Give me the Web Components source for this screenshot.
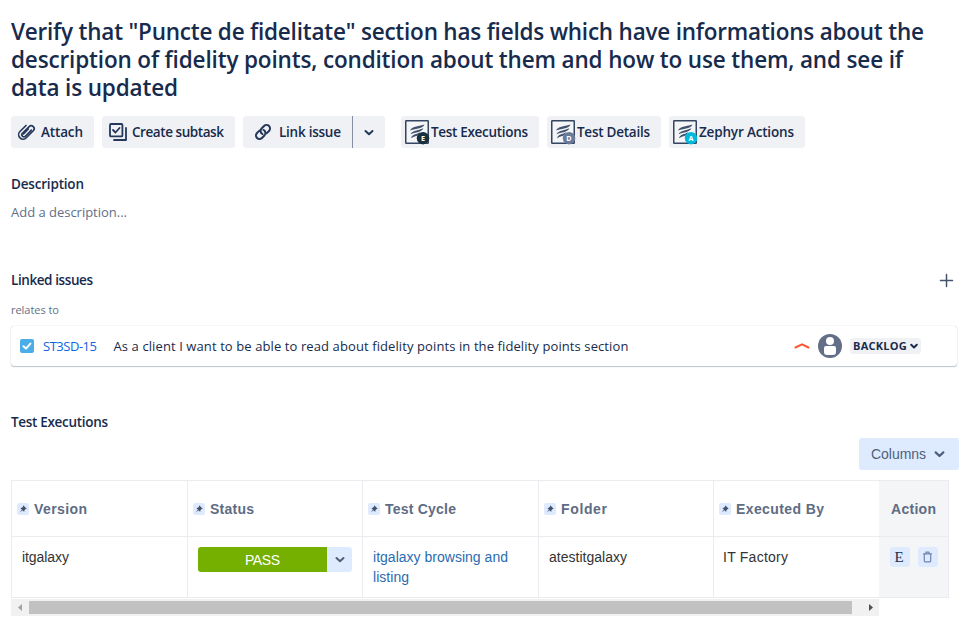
<!DOCTYPE html>
<html lang="en">
<head>
<meta charset="utf-8">
<title>Issue details</title>
<style>
html{background:#fff}
body{margin:0;overflow:hidden;font-family:"Open Sans","Noto Sans",sans-serif;color:#172b4d}
</style>
</head>
<body>
<issue-page></issue-page>
<script>
const define=(name,html,setup)=>customElements.define(name,class extends HTMLElement{
  connectedCallback(){
    if(this.shadowRoot)return;
    const t=document.createElement('template');
    t.innerHTML=typeof html==='function'?html(this):html;
    this.attachShadow({mode:'open'}).appendChild(t.content.cloneNode(true));
    if(setup)setup(this);
  }
});

/* One line of text, tracked so that it spans the width in its "w" attribute. */
define('text-line','<style>:host{display:block;white-space:nowrap}span{display:inline-block}</style><span><slot></slot></span>',el=>{
  const w=+el.getAttribute('w');
  if(!w)return;
  const s=el.shadowRoot.querySelector('span');
  s.style.letterSpacing='0.001px';
  const n=el.textContent.length;
  s.style.letterSpacing=((w-s.getBoundingClientRect().width)/(n-1)).toFixed(3)+'px';
});

const paths={
attach:'<path d="M15.6 8.3l-6.3 6.4a2.1 2.1 0 0 1-3-3l7-7a3 3 0 0 1 4.300 4.300l-7.300 7.300a4.600 4.600 0 0 1-6.600-6.500L10 3.500M12.400 7.200l-5 5" transform="translate(-.6 -.9) scale(.96)"/>',
subtask:'<rect x="1" y="1" width="12.4" height="12.4" rx="1"/><path d="M4 7l2.5 2.5L10.500 5M17 5v12H5"/>',
link:'<g transform="rotate(-45 9 9)"><path d="M7.500 5.500H4a3.500 3.500 0 0 0 0 7h3.500a3.500 3.500 0 0 0 3.300-4.600M10.500 12.500H14a3.500 3.500 0 0 0 0-7h-3.500a3.500 3.500 0 0 0-3.300 4.600"/></g>',
chevron:'<path d="M1.500 2L5 5.300L8.500 2"/>',
plus:'<path d="M6.500 .5v12M.5 6.500h12"/>',
up:'<path d="M1.500 5.500L8 2.300L14.500 5.500"/>',
trash:'<path d="M1.500 2.800h8M4 2.500V1.200h3v1.300M2.300 3v7q0 .8.8.8h4.800q.8 0 .8-.8V3"/>',
check:'<path d="M3.500 7.200l2.500 2.400L10.400 4.600"/>'
};
define('ui-icon',el=>{
  const g=k=>el.getAttribute(k);
  return `<style>:host{display:block;flex:none;line-height:0}svg{display:block;overflow:visible;fill:none;stroke:currentColor;stroke-width:${g('stroke')||2};stroke-linecap:round;stroke-linejoin:round}</style><svg width="${g('w')}" height="${g('h')}" viewBox="0 0 ${g('vb')||g('w')+' '+g('h')}">${paths[g('name')]}</svg>`;
});

define('zephyr-icon',el=>`<style>:host{display:block;flex:none}svg{display:block;overflow:visible}</style>
<svg width="24" height="24" viewBox="0 0 24 24"><rect x=".75" y=".75" width="22.500" height="22.500" rx=".5" fill="#f4f5f7" stroke="#344563" stroke-width="1.500"/>
<path d="M5 10.500C7.500 6 12 7 19.500 4.500C17.500 9.200 12 8 5 10.500zM5.500 14.300C8 10 12 11 18.500 8.300C16 13 10.500 12 5.500 14.300zM6 18.200C7.500 14 11 14.800 15 12.300C14 16.500 10 15.800 6 18.200z" fill="#42526e"/>
<circle cx="18" cy="18.200" r="6.200" fill="${el.getAttribute('color')}"/>
<text x="18" y="20.800" text-anchor="middle" font-family="Open Sans,sans-serif" font-size="7.200" font-weight="700" fill="#fff">${el.getAttribute('letter')}</text></svg>`);

define('action-button','<style>:host{display:flex;box-sizing:border-box;height:32px;align-items:center;background:#f0f1f4;border-radius:3px;font-size:13.500px;font-weight:600;color:#172b4d}</style><slot></slot>');

define('issue-title',`<style>:host{display:block;font-size:22.500px;font-weight:600;line-height:28px}</style>
<text-line w="913">Verify that "Puncte de fidelitate" section has fields which have informations about the</text-line>
<text-line w="892">description of fidelity points, condition about them and how to use them, and see if</text-line>
<text-line w="167">data is updated</text-line>`);

define('issue-toolbar',`<style>
:host{display:flex;gap:8px}
.split{display:flex;margin-right:8px}
.l{width:109px;border-radius:3px 0 0 3px;padding-left:11px}
.r{width:33px;border-left:1px solid #8590a2;border-radius:0 3px 3px 0;justify-content:center}
ui-icon{color:#24385b}
</style>
<action-button style="width:83px;padding-left:6px"><ui-icon name="attach" w="18" h="18" stroke="1.7"></ui-icon><text-line w="42" style="margin-left:6px">Attach</text-line></action-button>
<action-button style="width:133px;padding-left:7px"><ui-icon name="subtask" w="18" h="18" stroke="1.8"></ui-icon><text-line w="92" style="margin-left:5px">Create subtask</text-line></action-button>
<div class="split"><action-button class="l"><ui-icon name="link" w="18" h="18"></ui-icon><text-line w="62" style="margin-left:7px">Link issue</text-line></action-button><action-button class="r"><ui-icon name="chevron" w="10" h="7"></ui-icon></action-button></div>
<action-button style="width:138px;padding-left:4px"><zephyr-icon letter="E" color="#172f3f"></zephyr-icon><text-line w="97" style="margin-left:2px">Test Executions</text-line></action-button>
<action-button style="width:114px;padding-left:4px"><zephyr-icon letter="D" color="#6b7a99"></zephyr-icon><text-line w="73" style="margin-left:2px">Test Details</text-line></action-button>
<action-button style="width:136px;padding-left:4px"><zephyr-icon letter="A" color="#00b8d9"></zephyr-icon><text-line w="95" style="margin-left:2px">Zephyr Actions</text-line></action-button>`);

define('section-heading','<style>:host{display:flex;justify-content:space-between;align-items:center;height:20px;line-height:20px;font-size:13.500px;font-weight:600}</style><slot></slot>');

define('status-lozenge','<style>:host{display:flex;align-items:center;gap:3px;box-sizing:border-box;width:71px;height:16px;padding-left:3px;background:#f0f1f4;border-radius:3px;font-size:11px;font-weight:700;line-height:16px}</style><text-line w="52"><slot></slot></text-line><ui-icon name="chevron" w="8" h="6" vb="10 7" stroke="2.500"></ui-icon>',el=>{
  el.shadowRoot.querySelector('text-line').replaceChildren(el.textContent);
});

define('linked-issue',`<style>
:host{display:flex;align-items:center;box-sizing:border-box;width:946px;height:40px;padding:0 36px 0 9px;background:#fff;border-radius:3px;box-shadow:0 1px 1px rgba(9,30,66,.25),0 0 1px rgba(9,30,66,.31);font-size:13px}
.type{width:14px;height:14px;border-radius:2px;background:#4bade8;color:#fff}
.key{color:#0c66e4;margin-left:9px}
.sum{margin-left:17px;margin-right:auto}
.prio{color:#ff5630}
.avatar{display:block;margin:0 8px}
</style>
<div class="type"><ui-icon name="check" w="14" h="14"></ui-icon></div>
<text-line class="key" w="54">ST3SD-15</text-line>
<text-line class="sum" w="515">As a client I want to be able to read about fidelity points in the fidelity points section</text-line>
<ui-icon class="prio" name="up" w="16" h="8"></ui-icon>
<svg class="avatar" width="24" height="24" viewBox="0 0 24 24"><circle cx="12" cy="12" r="12" fill="#626f86"/><circle cx="12" cy="7" r="4" fill="#fff"/><path d="M6 14q0-2 2-2h8q2 0 2 2v4q0 3-3 3H9q-3 0-3-3z" fill="#fff"/></svg>
<status-lozenge>BACKLOG</status-lozenge>`);

define('column-head','<style>:host{display:flex;box-sizing:border-box;align-items:center;padding:1px 0 0 5px;border-left:1px solid #ebecf0;border-top:1px solid #ebecf0;font-size:14px;font-weight:700;color:#5e6c84;gap:5px}.pin{display:flex;width:12px;height:12px;background:#deebff;border-radius:2px}svg{display:block}</style><div class="pin"><svg width="12" height="12" viewBox="0 0 12 12"><path d="M6.200 2.300L9.700 5.800L8.700 6L7.400 7.300L7.200 8.900L5.500 7.200L2.800 9.500L4.900 6.600L3.300 5L5 4.800L6.100 3.500z" fill="#42526e"/></svg></div><slot></slot>');
define('data-cell','<style>:host{display:block;box-sizing:border-box;padding:10px 0 0 10px;border:1px solid #ebecf0;border-right:0;line-height:20px;font-size:14px;color:#333}</style><slot></slot>');

define('status-select','<style>:host{display:flex;width:154px;height:25px;border-radius:3px;overflow:hidden}.v{width:129px;box-sizing:border-box;background:#75b000;color:#fff;padding:1px 0 0 47px;line-height:25px}.d{flex:1;display:flex;align-items:center;justify-content:center;background:#deebff;color:#505f79}</style><div class="v"><text-line w="35">PASS</text-line></div><div class="d"><ui-icon name="chevron" w="10" h="7"></ui-icon></div>');

define('square-button','<style>:host{display:flex;align-items:center;justify-content:center;width:20px;height:20px;background:#deebff;border-radius:3px;color:#172b4d;font:14px/20px "Liberation Serif",serif}</style><slot></slot>');

define('execution-table',`<style>
:host{display:block;width:938px;font-family:"Liberation Sans",Arial,sans-serif}
.grid{display:grid;grid-template-columns:176px 175px 176px 175px 166px 70px;grid-template-rows:56px 62px}
.ah,.ac{box-sizing:border-box;background:#f4f5f7;border:1px solid #ebecf0;border-left:0;color:#5e6c84;display:flex}
.ah{border-bottom:0;font-size:14px;font-weight:700;align-items:center;padding:1px 0 0 12px}
.ac{padding:10px 0 0 11px;gap:8px}
.link{color:#2a6cb0}
.trash{color:#6f83ad;margin-right:1px}
</style>
<div class="grid">
<column-head><text-line w="53">Version</text-line></column-head>
<column-head><text-line w="44">Status</text-line></column-head>
<column-head><text-line w="71">Test Cycle</text-line></column-head>
<column-head><text-line w="46">Folder</text-line></column-head>
<column-head><text-line w="88">Executed By</text-line></column-head>
<div class="ah"><text-line w="45">Action</text-line></div>
<data-cell><text-line w="47">itgalaxy</text-line></data-cell>
<data-cell><status-select></status-select></data-cell>
<data-cell class="link"><text-line w="135">itgalaxy browsing and</text-line><text-line w="36">listing</text-line></data-cell>
<data-cell><text-line w="78">atestitgalaxy</text-line></data-cell>
<data-cell style="padding-left:9px"><text-line w="65">IT Factory</text-line></data-cell>
<div class="ac"><square-button><span style="margin-right:2px;font-size:15px">E</span></square-button><square-button><ui-icon class="trash" name="trash" w="11" h="12" stroke="1.2"></ui-icon></square-button></div>
</div>
<scroll-track></scroll-track>`);

define('scroll-track','<style>:host{display:flex;box-sizing:border-box;width:868px;height:17px;margin-top:1px;background:#f1f1f1;align-items:center}.t{width:823px;height:13px;background:#c1c1c1}svg{display:block}</style><svg width="18" height="17"><path d="M11 5v7L7 8.500z" fill="#a3a3a3"/></svg><div class="t"></div><svg width="27" height="17"><path d="M17 5v7l4-3.500z" fill="#505050"/></svg>');

define('columns-button','<style>:host{display:flex;box-sizing:border-box;align-items:center;width:100px;height:32px;padding-left:12px;gap:8px;border-radius:3px;background:#deebff;color:#505f79;font:14px/20px "Liberation Sans",Arial,sans-serif}</style><text-line w="55">Columns</text-line><ui-icon name="chevron" w="11" h="8" vb="10 7"></ui-icon>');

define('issue-page',`<style>
:host{display:block;box-sizing:border-box;width:963px;height:622px;padding:18px 4px 0 11px;overflow:hidden}
.muted{color:#626f86;font-size:13px;line-height:20px}
.small{font-size:11px}
</style>
<issue-title></issue-title>
<issue-toolbar style="margin-top:14px"></issue-toolbar>
<section-heading style="margin-top:26px"><text-line w="73">Description</text-line></section-heading>
<text-line w="116" class="muted" style="margin-top:8px">Add a description...</text-line>
<section-heading style="margin-top:48px;padding-right:6px"><text-line w="82">Linked issues</text-line><ui-icon name="plus" w="13" h="13" stroke="1.500" style="color:#44546f;margin-top:1px"></ui-icon></section-heading>
<text-line w="48" class="muted small" style="margin-top:10px">relates to</text-line>
<linked-issue style="margin-top:6px"></linked-issue>
<section-heading style="margin-top:46px"><text-line w="97">Test Executions</text-line></section-heading>
<columns-button style="margin:6px 0 10px auto"></columns-button>
<execution-table></execution-table>`);
</script>
</body>
</html>
